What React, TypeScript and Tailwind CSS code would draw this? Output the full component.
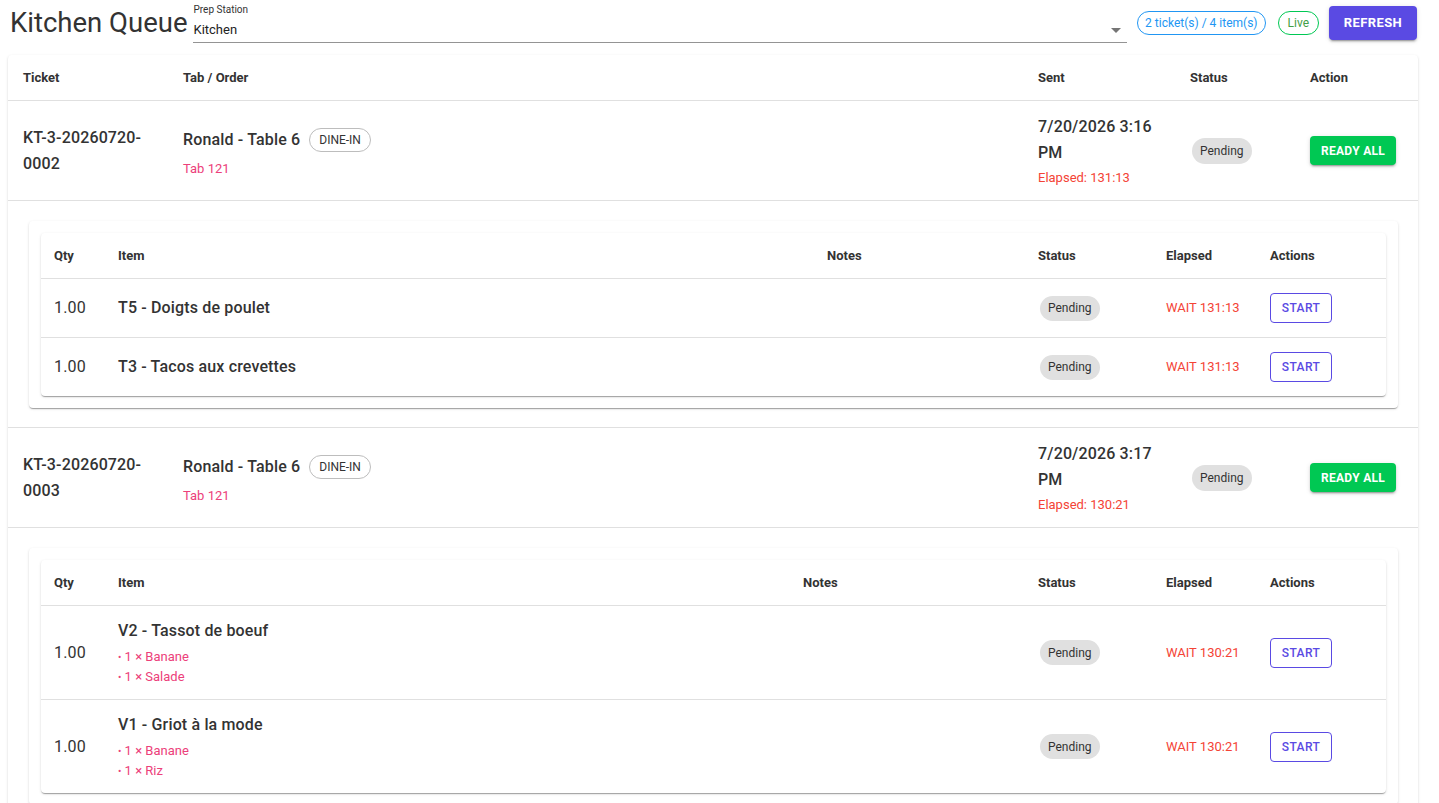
import { ChevronDown } from "lucide-react";

interface SubItem {
  qty: number;
  name: string;
}

interface TicketItem {
  qty: string;
  name: string;
  subs: SubItem[];
  elapsed: string;
}

interface Ticket {
  code: string;
  tab: string;
  tabNo: string;
  sent: string;
  elapsed: string;
  cols: string;
  items: TicketItem[];
}

const tickets: Ticket[] = [
  {
    code: "KT-3-20260720-0002",
    tab: "Ronald - Table 6",
    tabNo: "Tab 121",
    sent: "7/20/2026 3:16 PM",
    elapsed: "131:13",
    cols: "grid-cols-[65px_709px_211px_128px_104px_1fr]",
    items: [
      { qty: "1.00", name: "T5 - Doigts de poulet", subs: [], elapsed: "131:13" },
      { qty: "1.00", name: "T3 - Tacos aux crevettes", subs: [], elapsed: "131:13" },
    ],
  },
  {
    code: "KT-3-20260720-0003",
    tab: "Ronald - Table 6",
    tabNo: "Tab 121",
    sent: "7/20/2026 3:17 PM",
    elapsed: "130:21",
    cols: "grid-cols-[65px_685px_235px_128px_104px_1fr]",
    items: [
      {
        qty: "1.00",
        name: "V2 - Tassot de boeuf",
        subs: [
          { qty: 1, name: "Banane" },
          { qty: 1, name: "Salade" },
        ],
        elapsed: "130:21",
      },
      {
        qty: "1.00",
        name: "V1 - Griot à la mode",
        subs: [
          { qty: 1, name: "Banane" },
          { qty: 1, name: "Riz" },
        ],
        elapsed: "130:21",
      },
    ],
  },
];

const paperShadow =
  "shadow-[0_2px_1px_-1px_rgba(0,0,0,0.2),0_1px_1px_0_rgba(0,0,0,0.14),0_1px_3px_0_rgba(0,0,0,0.12)]";

const buttonShadow =
  "shadow-[0_3px_1px_-2px_rgba(0,0,0,0.2),0_2px_2px_0_rgba(0,0,0,0.14),0_1px_5px_0_rgba(0,0,0,0.12)]";

const ticketCols = "grid grid-cols-[160px_1fr_152px_120px_123px]";

const PendingChip = ({ tall }: { tall?: boolean }) => (
  <span
    className={`ml-[2px] inline-flex items-center rounded-full bg-[#e0e0e0] px-2 text-[12px] text-[#333] ${
      tall ? "h-[26px]" : "h-[25px]"
    }`}
  >
    Pending
  </span>
);

const ItemsTable = ({ ticket }: { ticket: Ticket }) => (
  <div className={`rounded-[4px] bg-white p-3 ${paperShadow}`}>
    <div className={`rounded-[4px] bg-white ${paperShadow}`}>
      {/* header */}
      <div
        className={`grid ${ticket.cols} box-content h-[45px] items-center border-b border-[#e0e0e0] text-[13px] font-bold text-[#333]`}
      >
        <div className="pl-[13px]">Qty</div>
        <div className="px-3">Item</div>
        <div className="px-3">Notes</div>
        <div className="px-3">Status</div>
        <div className="px-3">Elapsed</div>
        <div className="px-3">Actions</div>
      </div>
      {ticket.items.map((item, i) => (
        <div
          key={i}
          className={`grid ${ticket.cols} items-center ${
            i < ticket.items.length - 1 ? "border-b border-[#e0e0e0]" : ""
          } ${item.subs.length ? "pt-[13px] pb-[13px]" : "box-content h-[58px]"}`}
        >
          <div className="pl-[13px] text-[16px] tracking-[0.15px] text-[#333]">{item.qty}</div>
          <div className="px-3">
            <div className="text-[16px] font-medium leading-6 tracking-[0.15px] text-[#333]">
              {item.name}
            </div>
            {item.subs.length > 0 && (
              <div className="mt-[4px]">
                {item.subs.map((s, j) => (
                  <div key={j} className="text-[13px] leading-[19.5px] text-[#ec407a]">
                    <span className="text-[10px] leading-none">•</span> {s.qty} × {s.name}
                  </div>
                ))}
              </div>
            )}
          </div>
          <div className="px-3" />
          <div className="px-3">
            <PendingChip />
          </div>
          <div className="px-3 text-[13px] text-[#f44336]">WAIT {item.elapsed}</div>
          <div className="px-3">
            <button className="h-[30px] w-[62px] rounded-[4px] border border-[#5a4ae3] text-[12px] font-medium tracking-[0.4px] text-[#5a4ae3]">
              START
            </button>
          </div>
        </div>
      ))}
    </div>
  </div>
);

export default function App() {
  return (
    <div className="min-h-screen bg-white pl-2 pr-[21px] font-['Roboto',sans-serif] text-[#333]">
      {/* top bar */}
      <div className="flex h-[47px] items-start">
        <h1 className="ml-[2px] mt-[6px] text-[27.5px] leading-[34px] text-[#333]">Kitchen Queue</h1>
        <div className="ml-[6px] flex h-[43px] flex-1 flex-col border-b border-[#949494] pt-[4px]">
          <span className="text-[10px] leading-[12px] text-[#333]">Prep Station</span>
          <div className="mt-[5px] flex items-center justify-between">
            <span className="text-[13px] leading-[18px] text-[#222]">Kitchen</span>
            <svg width="10" height="5" viewBox="0 0 10 5" className="mr-[6px]">
              <path d="M0 0 L10 0 L5 5 Z" fill="#757575" />
            </svg>
          </div>
        </div>
        <span className="ml-[10px] mt-[11px] inline-flex h-[24px] items-center rounded-full border border-[#2196f3] px-[7px] text-[12px] text-[#2196f3]">
          2 ticket(s) / 4 item(s)
        </span>
        <span className="ml-[12px] mt-[11px] inline-flex h-[24px] items-center rounded-full border border-[#00c853] px-[9px] text-[12px] text-[#43a047]">
          Live
        </span>
        <button
          className={`ml-[10px] mr-[1px] mt-[6px] h-[34px] w-[88px] rounded-[4px] bg-[#5a4ae3] text-[13px] font-bold tracking-[0.4px] text-white ${buttonShadow}`}
        >
          REFRESH
        </button>
      </div>

      {/* main table */}
      <div className={`mt-[8px] rounded-[4px] bg-white ${paperShadow}`}>
        <div
          className={`${ticketCols} h-[46px] items-center border-b border-[#e0e0e0] text-[13px] font-bold text-[#333]`}
        >
          <div className="px-[15px]">Ticket</div>
          <div className="px-[15px]">Tab / Order</div>
          <div className="px-[15px]">Sent</div>
          <div className="px-[15px]">Status</div>
          <div className="px-[15px]">Action</div>
        </div>

        {tickets.map((t) => (
          <div key={t.code}>
            <div className={`${ticketCols} h-[100px] items-center border-b border-[#e0e0e0]`}>
              <div className="px-[15px] text-[16px] font-medium leading-[26px] tracking-[0.15px] break-words">
                {t.code}
              </div>
              <div className="mt-[6px] px-[15px]">
                <div className="flex items-center gap-[9px]">
                  <span className="text-[16px] font-medium leading-6 tracking-[0.15px]">{t.tab}</span>
                  <span className="inline-flex h-[24px] items-center rounded-full border border-[#bdbdbd] px-[9px] text-[12px] text-[#333]">
                    DINE-IN
                  </span>
                </div>
                <div className="mt-[7px] text-[13px] leading-[20px] text-[#ec407a]">{t.tabNo}</div>
              </div>
              <div className="px-[15px]">
                <div className="text-[16px] font-medium leading-[26px] tracking-[0.15px]">{t.sent}</div>
                <div className="mt-[2px] text-[13px] leading-[20px] text-[#f44336]">
                  Elapsed: {t.elapsed}
                </div>
              </div>
              <div className="px-[15px]">
                <PendingChip tall />
              </div>
              <div className="px-[15px]">
                <button
                  className={`h-[29px] w-[86px] rounded-[4px] bg-[#00c853] text-[12px] font-bold tracking-[0.3px] text-white ${buttonShadow}`}
                >
                  READY ALL
                </button>
              </div>
            </div>
            <div className="border-b border-[#e0e0e0] pb-[19px] pl-[21px] pr-5 pt-5">
              <ItemsTable ticket={t} />
            </div>
          </div>
        ))}
      </div>
    </div>
  );
}
